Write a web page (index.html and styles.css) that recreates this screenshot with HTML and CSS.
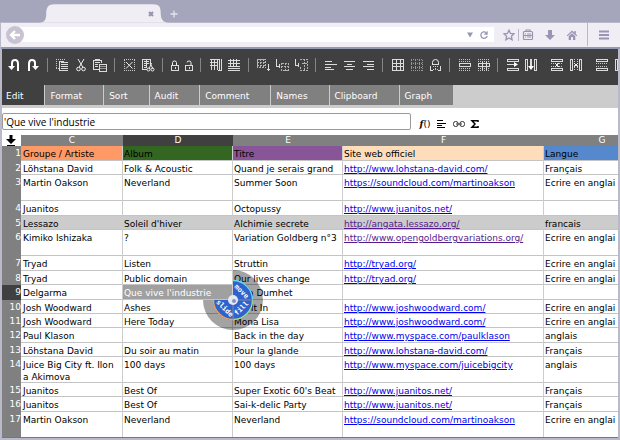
FILE: index.html
```html
<!DOCTYPE html>
<html lang="fr">
<head>
<meta charset="utf-8">
<title>Tableur</title>
<link rel="stylesheet" href="styles.css">
</head>
<body>
<header class="browser">
  <div class="tabstrip">
    <div class="browser-tab">
      <svg class="tab-shape" viewBox="0 0 126 18"><path d="M0 18C6 18 7 14 7 9C7 3 9 0 15 0H110C117 0 118 3 118 9C118 14 120 18 126 18Z"/></svg>
      <button class="plain tab-close" aria-label="Fermer"><svg width="6" height="6" viewBox="0 0 6 6"><path d="M1 1L5 5M5 1L1 5" stroke="#9694ad" stroke-width="2"/></svg></button>
    </div>
    <button class="plain tab-new" aria-label="Nouvel onglet"><svg width="8" height="8" viewBox="0 0 8 8"><path d="M4 0.500V7.500M0.500 4H7.500" stroke="#e6e3ef" stroke-width="1.300"/></svg></button>
  </div>
  <nav class="navbar">
    <button class="plain back" aria-label="Retour"><svg width="18" height="18" viewBox="0 0 18 18"><circle cx="9" cy="9" r="9" fill="#c8c2d2"/><path d="M14 9H6M9 5L5 9L9 13" fill="none" stroke="#fff" stroke-width="2.400"/></svg></button>
    <div class="address">
      <input class="url" type="text" aria-label="Adresse">
      <button class="plain" aria-label="Historique"><svg width="8" height="8" viewBox="0 0 8 8"><path d="M1 1.500H7L4 6.500Z" fill="#9896b4"/></svg></button>
      <button class="plain" aria-label="Actualiser"><svg width="10" height="10" viewBox="0 0 10 10"><path d="M7 2.500A3.200 3.200 0 1 0 8.200 5.800" fill="none" stroke="#9896b4" stroke-width="1.300"/><path d="M8.700 0.800V4.800H4.700Z" fill="#9896b4"/></svg></button>
    </div>
    <div class="nav-icons">
      <button class="plain" aria-label="Marquer"><svg width="12" height="12" viewBox="0 0 12 12"><path d="M6 1.200L7.500 4.400L11 4.800L8.400 7.200L9.100 10.800L6 9L2.900 10.800L3.600 7.200L1 4.800L4.500 4.400Z" fill="none" stroke="#9896b4" stroke-width="1.300"/></svg></button>
      <span class="nav-sep short"></span>
      <button class="plain" aria-label="Marque-pages"><svg width="12" height="12" viewBox="0 0 12 12"><path d="M1.500 3.500Q1.500 2.500 2.500 2.500H9.500Q10.500 2.500 10.500 3.500V9.500Q10.500 10.500 9.500 10.500H2.500Q1.500 10.500 1.500 9.500ZM4 2V1H8V2M3 5H4M5 5H9M3 8H4M5 8H9M1.500 6.500H10.500" fill="none" stroke="#9896b4" stroke-width="1.200"/></svg></button>
    </div>
    <button class="plain nav-down" aria-label="Téléchargements"><svg width="12" height="12" viewBox="0 0 12 12"><path d="M4 1H8V6H11L6 11L1 6H4Z" fill="#9896b4"/></svg></button>
    <button class="plain nav-home" aria-label="Accueil"><svg width="12" height="12" viewBox="0 0 12 12"><path d="M6 1.500L0.700 6.500L1.500 7.300L6 3.200L10.500 7.300L11.300 6.500L9.800 5V2H8.300V3.600ZM2.700 7.200V11H5V8H7V11H9.300V7.200L6 4.300Z" fill="#9896b4"/></svg></button>
    <span class="nav-sep tall"></span>
    <button class="plain nav-menu" aria-label="Menu"><svg width="12" height="10" viewBox="0 0 12 10"><path d="M1 1.500H11M1 5H11M1 8.500H11" stroke="#9896b4" stroke-width="1.800"/></svg></button>
  </nav>
</header>

<main class="app">
  <div class="toolbar" role="toolbar" aria-label="Outils">
    <button class="tool" aria-label="Annuler"><svg viewBox="0 0 14 14"><path d="M5 9V5Q5 2 8 2Q11 2 11 6V13" fill="none" stroke="#fff" stroke-width="2"/><path d="M1 8H8L4.500 12Z" fill="#fff"/></svg></button>
    <button class="tool" aria-label="Rétablir"><svg viewBox="0 0 14 14"><path d="M9 9V5Q9 2 6 2Q3 2 3 6V13" fill="none" stroke="#fff" stroke-width="2"/><path d="M6 8H13L9.500 12Z" fill="#fff"/></svg></button>
    <span class="sep"></span>
    <button class="tool" aria-label="Copier"><svg viewBox="0 0 14 14"><path d="M1.500 1V11M1 1.500H10M1 10.500H4" class="dots"/><path d="M4.500 3V13M6 4.500H13M6 6.500H13M6 8.500H13M6 10.500H13M4 12.500H13M4 3.500H9" class="ln"/></svg></button>
    <button class="tool" aria-label="Couper"><svg viewBox="0 0 14 14"><path d="M4 1L9 9.500M10 1L5 9.500" class="smooth"/><circle cx="4.500" cy="11" r="1.800" class="smooth"/><circle cx="9.500" cy="11" r="1.800" class="smooth"/></svg></button>
    <button class="tool" aria-label="Coller"><svg viewBox="0 0 14 14"><path d="M0.500 2.500H8.500V5M0.500 2V11.500H6M2 1.500H7M2 4.500H7M2 6.500H5M2 8.500H5" class="ln"/><path d="M6.500 6.500H13.500V13.500H6.500Z" class="ln"/><path d="M7 8.500H13M7 10.500H13" class="ln dim"/></svg></button>
    <span class="sep"></span>
    <button class="tool" aria-label="Effacer"><svg viewBox="0 0 14 14"><path d="M2.500 2V12M12.500 2V12M2 1.500H13M2 12.500H13" class="dots"/><path d="M4 4L10.500 10.500M10.500 4L4 10.500" class="smooth"/></svg></button>
    <button class="tool" aria-label="Vider la feuille"><svg viewBox="0 0 14 14"><path d="M1.500 1V11.500H6M1 1.500H9.500V6M3 3.500H8M3 5.500H8M3 7.500H6M3 9.500H6M5.500 2V9" class="ln"/><path d="M9 5L12 11M10.500 5L8 11" class="smooth"/><circle cx="7.500" cy="11.500" r="1.500" class="smooth"/><circle cx="11.500" cy="11.500" r="1.500" class="smooth"/></svg></button>
    <span class="sep"></span>
    <button class="tool narrow" aria-label="Verrouiller"><svg viewBox="0 0 9 14"><path d="M2.500 7V4.500Q2.500 3 4.500 3Q6.500 3 6.500 4.500V7" class="smooth"/><path d="M1.500 7.500H8.500V12.500H1.500ZM5 9V11" class="ln"/></svg></button>
    <button class="tool narrow" aria-label="Déverrouiller"><svg viewBox="0 0 9 14"><path d="M3 4.500Q3 3 5 3Q7 3 7 4.500V7" class="smooth"/><path d="M1.500 7.500H8.500V12.500H1.500ZM5 9V11" class="ln"/></svg></button>
    <span class="sep"></span>
    <button class="tool" aria-label="Figer les colonnes"><svg viewBox="0 0 14 14"><path d="M2 1.500H12M2 4.500H10M3.500 1V12M6.500 1V12M9.500 1V12M2 7.500H10M11.500 1V13" class="ln"/><path d="M13.500 1V13M10 12.500H14" class="ln"/></svg></button>
    <button class="tool" aria-label="Figer les lignes"><svg viewBox="0 0 14 14"><path d="M1 2.500H13M1 5.500H13M1 8.500H13M3.500 1V9M6.500 1V9M9.500 1V9M1 10.500H13M1 12.500H13" class="ln"/></svg></button>
    <span class="sep"></span>
    <button class="tool" aria-label="Recopier vers le bas"><svg viewBox="0 0 14 14"><path d="M1.500 1.500H9.500V9.500H1.500ZM1 4.500H10M1 7.500H10M4.500 1V10M7.500 1V10" class="dashes"/><path d="M12.500 6V13M11 11.500H14" class="ln"/></svg></button>
    <button class="tool" aria-label="Insérer des lignes"><svg viewBox="0 0 14 14"><path d="M1.500 1V8H4M4.500 6V10" class="ln"/><path d="M6.500 5.500H13.500V12.500H6.500ZM6 8.500H14M10.500 5V13" class="dashes"/></svg></button>
    <button class="tool" aria-label="Insérer des colonnes"><svg viewBox="0 0 14 14"><path d="M1.500 1V7H5M4.500 5V9" class="ln"/><path d="M6 1.500H13.500V12.500H6.500V9M8 5.500H14M10.500 1V13" class="dashes"/></svg></button>
    <span class="sep"></span>
    <button class="tool" aria-label="Aligner à gauche"><svg viewBox="0 0 14 14"><path d="M2 3.500H9M2 6.500H14M2 9.500H8M2 11.500H11" class="ln"/></svg></button>
    <button class="tool" aria-label="Centrer"><svg viewBox="0 0 14 14"><path d="M2 3.500H13M5 6.500H10M2 8.500H13M4 11.500H11" class="ln"/></svg></button>
    <button class="tool" aria-label="Aligner à droite"><svg viewBox="0 0 14 14"><path d="M2 3.500H13M6 6.500H13M2 8.500H13M6 11.500H13" class="ln"/></svg></button>
    <span class="sep"></span>
    <button class="tool" aria-label="Bordures"><svg viewBox="0 0 14 14"><path d="M2.500 1.500H13.500V12.500H2.500ZM2 5.500H14M2 8.500H14M6.500 1V13M10.500 1V13" class="ln"/></svg></button>
    <button class="tool" aria-label="Sans bordures"><svg viewBox="0 0 14 14"><path d="M2 1.500H14M2 5.500H14M2 9.500H14M2 12.500H14M2.500 2V13M6.500 2V13M10.500 2V13M13.500 2V13" class="dots dim"/></svg></button>
    <button class="tool" aria-label="Protéger"><svg viewBox="0 0 14 14"><path d="M4.500 6V4.500Q4.500 1.500 7.500 1.500Q10.500 1.500 10.500 4.500V6" class="smooth"/><path d="M4 6.500H11M2.500 8V12M12.500 8V12M2 12.500H5M10 12.500H13" class="ln"/><path d="M5 8.500H10M5 11.500H10M7.500 8V12" class="dots"/></svg></button>
    <span class="sep"></span>
    <button class="tool" aria-label="Fusionner"><svg viewBox="0 0 14 14"><path d="M2 1.500H14M2 3.500H14M2 10.500H14M2 12.500H14" class="dots"/><path d="M2.500 5.500H13.500V8.500H2.500Z" class="ln"/></svg></button>
    <button class="tool" aria-label="Scinder"><svg viewBox="0 0 14 14"><path d="M2 1.500H14M2 3.500H14M2 10.500H14M2 12.500H14" class="dots"/><path d="M2.500 5.500H13.500V8.500H2.500ZM6.500 4V12M10.500 4V12" class="ln"/></svg></button>
    <span class="sep"></span>
    <button class="tool" aria-label="Insérer une ligne"><svg viewBox="0 0 14 14"><path d="M2.500 1.500H13.500V3.500H2.500ZM2.500 10.500H13.500V12.500H2.500ZM2 6.500H10" class="ln"/><path d="M9 4L13 6.500L9 9Z" fill="#fff"/></svg></button>
    <button class="tool" aria-label="Insérer une colonne"><svg viewBox="0 0 14 14"><path d="M1.500 1.500H3.500V12.500H1.500ZM10.500 1.500H12.500V12.500H10.500ZM6.500 1V10M7.500 1V10" class="ln"/><path d="M4 8H10L7 12Z" fill="#fff"/></svg></button>
    <button class="tool group" aria-label="Supprimer la ligne"><svg viewBox="0 0 14 14"><path d="M1.500 1.500H12.500V3.500H1.500ZM1.500 10.500H12.500V12.500H1.500Z" class="ln"/><path d="M1 5.500H13M1 8.500H13" class="dots"/><path d="M5 5L9 9M9 5L5 9" class="smooth"/></svg></button>
    <button class="tool" aria-label="Supprimer la colonne"><svg viewBox="0 0 14 14"><path d="M1.500 1.500H3.500V12.500H1.500ZM10.500 1.500H12.500V12.500H10.500Z" class="ln"/><path d="M5.500 1V13M8.500 1V13" class="dots"/><path d="M5 5L9 9M9 5L5 9" class="smooth"/></svg></button>
    <button class="tool group" aria-label="Masquer la ligne"><svg viewBox="0 0 14 14"><path d="M1.500 1.500H12.500V3.500H1.500ZM1.500 10.500H12.500V12.500H1.500Z" class="ln"/><path d="M1 5.500H13M1 8.500H13" class="dots"/></svg></button>
    <button class="tool" aria-label="Masquer la colonne"><svg viewBox="0 0 14 14"><path d="M1.500 1.500H3.500V12.500H1.500ZM10.500 1.500H12.500V12.500H10.500Z" class="ln"/></svg></button>
  </div>

  <nav class="menu">
    <button class="menu-item current">Edit</button>
    <button class="menu-item">Format</button>
    <button class="menu-item">Sort</button>
    <button class="menu-item">Audit</button>
    <button class="menu-item">Comment</button>
    <button class="menu-item">Names</button>
    <button class="menu-item">Clipboard</button>
    <button class="menu-item">Graph</button>
  </nav>

  <div class="formula">
    <input class="formula-input" type="text" aria-label="Contenu de la cellule" value="'Que vive l'industrie">
    <div class="formula-tools">
      <button class="plain fx" aria-label="Fonction"><i>f</i>()</button>
      <button class="plain" aria-label="Texte"><svg width="12" height="10" viewBox="0 0 12 10"><path d="M1 1.500H7M1 4.500H10M1 6.500H6M1 8.500H9" stroke="#000" shape-rendering="crispEdges"/></svg></button>
      <button class="plain" aria-label="Lien"><svg width="12" height="10" viewBox="0 0 12 10"><g fill="none" stroke="#333"><rect x="0.500" y="2.500" width="4.500" height="5" rx="2"/><rect x="7" y="2.500" width="4.500" height="5" rx="2"/><path d="M3 5H9"/></g></svg></button>
      <button class="plain" aria-label="Somme"><svg width="10" height="10" viewBox="0 0 10 10"><path d="M8 3V1.800H2L5 5L2 8.200H8V7" fill="none" stroke="#000" stroke-width="1.500"/></svg></button>
    </div>
  </div>

  <div class="sheet">
    <table class="grid">
      <colgroup><col class="c-num"><col class="c-c"><col class="c-d"><col class="c-e"><col class="c-f"><col class="c-g"></colgroup>
      <thead>
        <tr>
          <th class="corner"><button class="plain" aria-label="Aller en bas"><svg width="10" height="11" viewBox="0 0 10 11"><path d="M3.500 0H6.500V4H10L5 9L0 4H3.500ZM1 10H9V11H1Z" fill="#000"/></svg></button></th>
          <th>C</th><th class="active">D</th><th>E</th><th>F</th><th>G</th>
        </tr>
      </thead>
      <tbody>
        <tr class="roomy"><th>1</th><td class="orange">Groupe / Artiste</td><td class="green">Album</td><td class="purple">Titre</td><td class="peach">Site web officiel</td><td class="blue">Langue</td></tr>
        <tr><th>2</th><td>Löhstana David</td><td>Folk &amp; Acoustic</td><td>Quand je serais grand</td><td><a href="#">http://www.lohstana-david.com/</a></td><td>Français</td></tr>
        <tr class="double"><th>3</th><td>Martin Oakson</td><td>Neverland</td><td>Summer Soon</td><td><a href="#">https://soundcloud.com/martinoakson</a></td><td>Ecrire en anglai</td></tr>
        <tr class="roomy"><th>4</th><td>Juanitos</td><td></td><td>Octopussy</td><td><a href="#">http://www.juanitos.net/</a></td><td></td></tr>
        <tr class="marked"><th>5</th><td>Lessazo</td><td>Soleil d'hiver</td><td>Alchimie secrete</td><td><a class="seen" href="#">http://angata.lessazo.org/</a></td><td>francais</td></tr>
        <tr class="double"><th>6</th><td>Kimiko Ishizaka</td><td>?</td><td>Variation Goldberg n°3</td><td><a class="seen" href="#">http://www.opengoldbergvariations.org/</a></td><td>Ecrire en anglai</td></tr>
        <tr class="roomy"><th>7</th><td>Tryad</td><td>Listen</td><td>Struttin</td><td><a href="#">http://tryad.org/</a></td><td>Ecrire en anglai</td></tr>
        <tr><th>8</th><td>Tryad</td><td>Public domain</td><td>Our lives change</td><td><a href="#">http://tryad.org/</a></td><td>Ecrire en anglai</td></tr>
        <tr class="roomy"><th class="active">9</th><td>Delgarma</td><td class="selected">Que vive l'industrie
          <svg class="wheel" width="60" height="60" viewBox="-30 -30 60 60">
            <path d="M0 0V-30A30 30 0 1 1 -30 0Z" fill="#000" fill-opacity="0.360"/>
            <path d="M0 0V-20A20 20 0 1 1 -20 0Z" fill="#2f62cb"/>
            <path d="M0 -19.500A19.500 19.500 0 0 1 19.500 0" fill="none" stroke="#62d8f4" stroke-width="1.300"/>
            <path d="M19.500 0A19.500 19.500 0 0 1 0 19.500" fill="none" stroke="#a5e08a" stroke-width="1.300"/>
            <path d="M0 19.500A19.500 19.500 0 0 1 -19.500 0" fill="none" stroke="#f0a45e" stroke-width="1.300"/>
            <path d="M0 0H20M0 0V20" stroke="#7f8cab"/>
            <circle r="5" fill="#e4e8f2"/><circle cx="1" cy="1" r="2" fill="#7f93c8"/>
            <g class="wheel-text">
              <text transform="rotate(45)" x="0" y="-10">move</text>
              <text transform="rotate(-45)" x="0" y="14">fill</text>
              <text transform="rotate(45)" x="0" y="14">slide</text>
            </g>
          </svg></td><td>Lora Dumhet</td><td></td><td></td></tr>
        <tr><th>10</th><td>Josh Woodward</td><td>Ashes</td><td>Let It In</td><td><a href="#">http://www.joshwoodward.com/</a></td><td>Ecrire en anglai</td></tr>
        <tr><th>11</th><td>Josh Woodward</td><td>Here Today</td><td>Mona Lisa</td><td><a href="#">http://www.joshwoodward.com/</a></td><td>Ecrire en anglai</td></tr>
        <tr class="roomy"><th>12</th><td>Paul Klason</td><td></td><td>Back in the day</td><td><a href="#">http://www.myspace.com/paulklason</a></td><td>anglais</td></tr>
        <tr><th>13</th><td>Löhstana David</td><td>Du soir au matin</td><td>Pour la glande</td><td><a href="#">http://www.lohstana-david.com/</a></td><td>Français</td></tr>
        <tr class="double"><th>14</th><td>Juice Big City ft. Ilon<br>a Akimova</td><td>100 days</td><td>100 days</td><td><a href="#">http://www.myspace.com/juicebigcity</a></td><td>anglais</td></tr>
        <tr><th>15</th><td>Juanitos</td><td>Best Of</td><td>Super Exotic 60's Beat</td><td><a href="#">http://www.juanitos.net/</a></td><td>Français</td></tr>
        <tr class="roomy"><th>16</th><td>Juanitos</td><td>Best Of</td><td>Sai-k-delic Party</td><td><a href="#">http://www.juanitos.net/</a></td><td>Français</td></tr>
        <tr class="double"><th>17</th><td>Martin Oakson</td><td>Neverland</td><td>Neverland</td><td><a href="#">https://soundcloud.com/martinoakson</a></td><td>Ecrire en anglai</td></tr>
      </tbody>
    </table>
  </div>
</main>
</body>
</html>
```
FILE: styles.css
```css
* { box-sizing: border-box; }

body {
  margin: 0;
  height: 100vh;
  overflow: hidden;
  display: flex;
  flex-direction: column;
  background: #b9b9ca;
  font-family: "DejaVu Sans", sans-serif;
  font-size: 9px;
  line-height: 12px;
  color: #000;
}

svg { display: block; }

.plain {
  border: 0;
  padding: 0;
  background: none;
  color: inherit;
  display: block;
}

/* Browser frame */
.tabstrip {
  height: 23px;
  padding: 4px 0 0 39px;
  display: flex;
  align-items: flex-start;
  background: #a5a5bb;
  border-bottom: 1px solid #b9b8ca;
}

.browser-tab {
  position: relative;
  width: 130px;
  height: 19px;
  display: flex;
  align-items: center;
  justify-content: flex-end;
  padding-right: 15px;
}

.tab-shape {
  position: absolute;
  inset: 0;
  width: 130px;
  height: 19px;
  fill: #f0edf4;
}

.tab-close { position: relative; }

.tab-new { margin: 6px 0 0 1px; }

.navbar {
  height: 26px;
  display: flex;
  align-items: center;
  padding: 0 10px 1px 5px;
  margin-left: 1px;
  background: #f0edf4;
  border-bottom: 2px solid #9498b2;
}

.back { z-index: 1; }

.address {
  flex: 1;
  height: 15px;
  margin-left: -4px;
  padding-right: 5px;
  display: flex;
  align-items: center;
  gap: 5px;
  background: #fff;
}

.url {
  flex: 1;
  min-width: 0;
  border: 0;
  padding: 0 8px;
  height: 15px;
  background: none;
  outline: 0;
}

.nav-icons {
  display: flex;
  align-items: center;
  gap: 3px;
  margin-left: 9px;
}

.nav-sep { width: 1px; background: #b9b8ca; }
.short { height: 12px; }
.tall { height: 23px; margin: 0 10px 0 9px; }
.nav-down { margin-left: 10px; }
.nav-home { margin-left: 10px; }

/* Application */
.app {
  flex: 1;
  min-height: 0;
  margin: 0 2px 2px;
  display: flex;
  flex-direction: column;
  background: #fff;
  border-bottom: 1px solid #777;
}

.toolbar {
  flex: none;
  height: 36px;
  padding: 0 0 4px 5px;
  display: flex;
  align-items: center;
  gap: 5px;
  overflow: hidden;
  background: #404040;
}

.tool {
  flex: none;
  width: 14px;
  height: 14px;
  padding: 0;
  border: 0;
  background: none;
}

.narrow { width: 9px; }
.group { margin-left: 7px; }

.sep {
  flex: none;
  width: 1px;
  height: 14px;
  margin: 0 2px;
  background: #858585;
}

.ln, .dots, .dashes {
  fill: none;
  stroke: #dcdcdc;
  stroke-width: 1px;
  shape-rendering: crispEdges;
}

.dots { stroke: #c8c8c8; stroke-dasharray: 1 1; }
.dashes { stroke: #b4b4b4; stroke-dasharray: 2 1; }
.dim { stroke: #999; }
.smooth { fill: none; stroke: #eee; stroke-width: 1px; }

.menu {
  flex: none;
  height: 23px;
  display: flex;
  align-items: flex-start;
  background: #ccc;
}

.menu-item {
  height: 20px;
  padding: 2px 21px 0 5px;
  border: 0;
  border-right: 1px solid #ccc;
  background: #808080;
  color: #fff;
  font: inherit;
}

.menu-item:last-child { border-right: 0; }
.menu .current { padding-left: 4px; background: #404040; }

.formula {
  flex: none;
  height: 27px;
  display: flex;
  align-items: center;
}

.formula-input {
  flex: 1;
  min-width: 0;
  height: 17px;
  padding: 0 1px;
  border: 1px solid #999;
  border-radius: 2px;
  outline: 0;
  background: #fff;
  font: 10px "Open Sans", sans-serif;
}

.formula-tools {
  flex: none;
  width: 207px;
  padding: 4px 0 0 8px;
  display: flex;
  align-items: center;
  gap: 5px;
}

.fx {
  width: 12px;
  height: 12px;
  font: 9px "DejaVu Sans", sans-serif;
  line-height: 10px;
}

.fx i { font-family: "DejaVu Serif", serif; font-weight: bold; }

/* Sheet */
.sheet {
  flex: 1;
  min-height: 0;
  overflow: hidden;
}

.grid {
  table-layout: fixed;
  width: 658px;
  min-width: 100%;
  border-collapse: separate;
  border-spacing: 0;
}

.c-num { width: 19px; }
.c-c { width: 102px; }
.c-d, .c-e { width: 110px; }
.c-f { width: 201px; }
.c-g { width: 116px; }

.grid th {
  padding: 0;
  background: #808080;
  color: #fff;
  font-weight: normal;
  vertical-align: top;
}

.grid thead th { height: 11px; line-height: 11px; }
.grid tbody th { text-align: right; line-height: 14px; }
.grid .corner { padding-left: 4px; background: #fff; }
.grid th.active { background: #404040; }

/* Row rules are inset shadows, so that they take no height from the text */
.grid td {
  padding: 2px 0 0 2px;
  border-right: 1px solid #ccc;
  box-shadow: inset 0 -1px #c4c4c4;
  vertical-align: top;
  white-space: nowrap;
}

.grid td + td { padding-left: 1px; }

.grid tbody tr { height: 14px; }
.grid tbody .roomy { height: 15px; }
.grid tbody .double { height: 26px; }

.orange { background: #ff9966; }
.green { background: #336620; }
.purple { background: #885599; }
.peach { background: #ffddbb; }
.blue { background: #5588cc; }
.marked td { background: #ccc; }

.grid a { color: #0000ee; }
.grid .seen { color: #551a8b; }

.grid .selected {
  position: relative;
  background: #a0a0a0;
  color: #fff;
}

/* Fill handle menu, centred on the corner of the selected cell */
.wheel {
  position: absolute;
  right: -31px;
  bottom: -30px;
  z-index: 2;
}

.wheel-text {
  fill: #fff;
  font: bold 7px "DejaVu Sans Mono", monospace;
  text-anchor: middle;
}
```
